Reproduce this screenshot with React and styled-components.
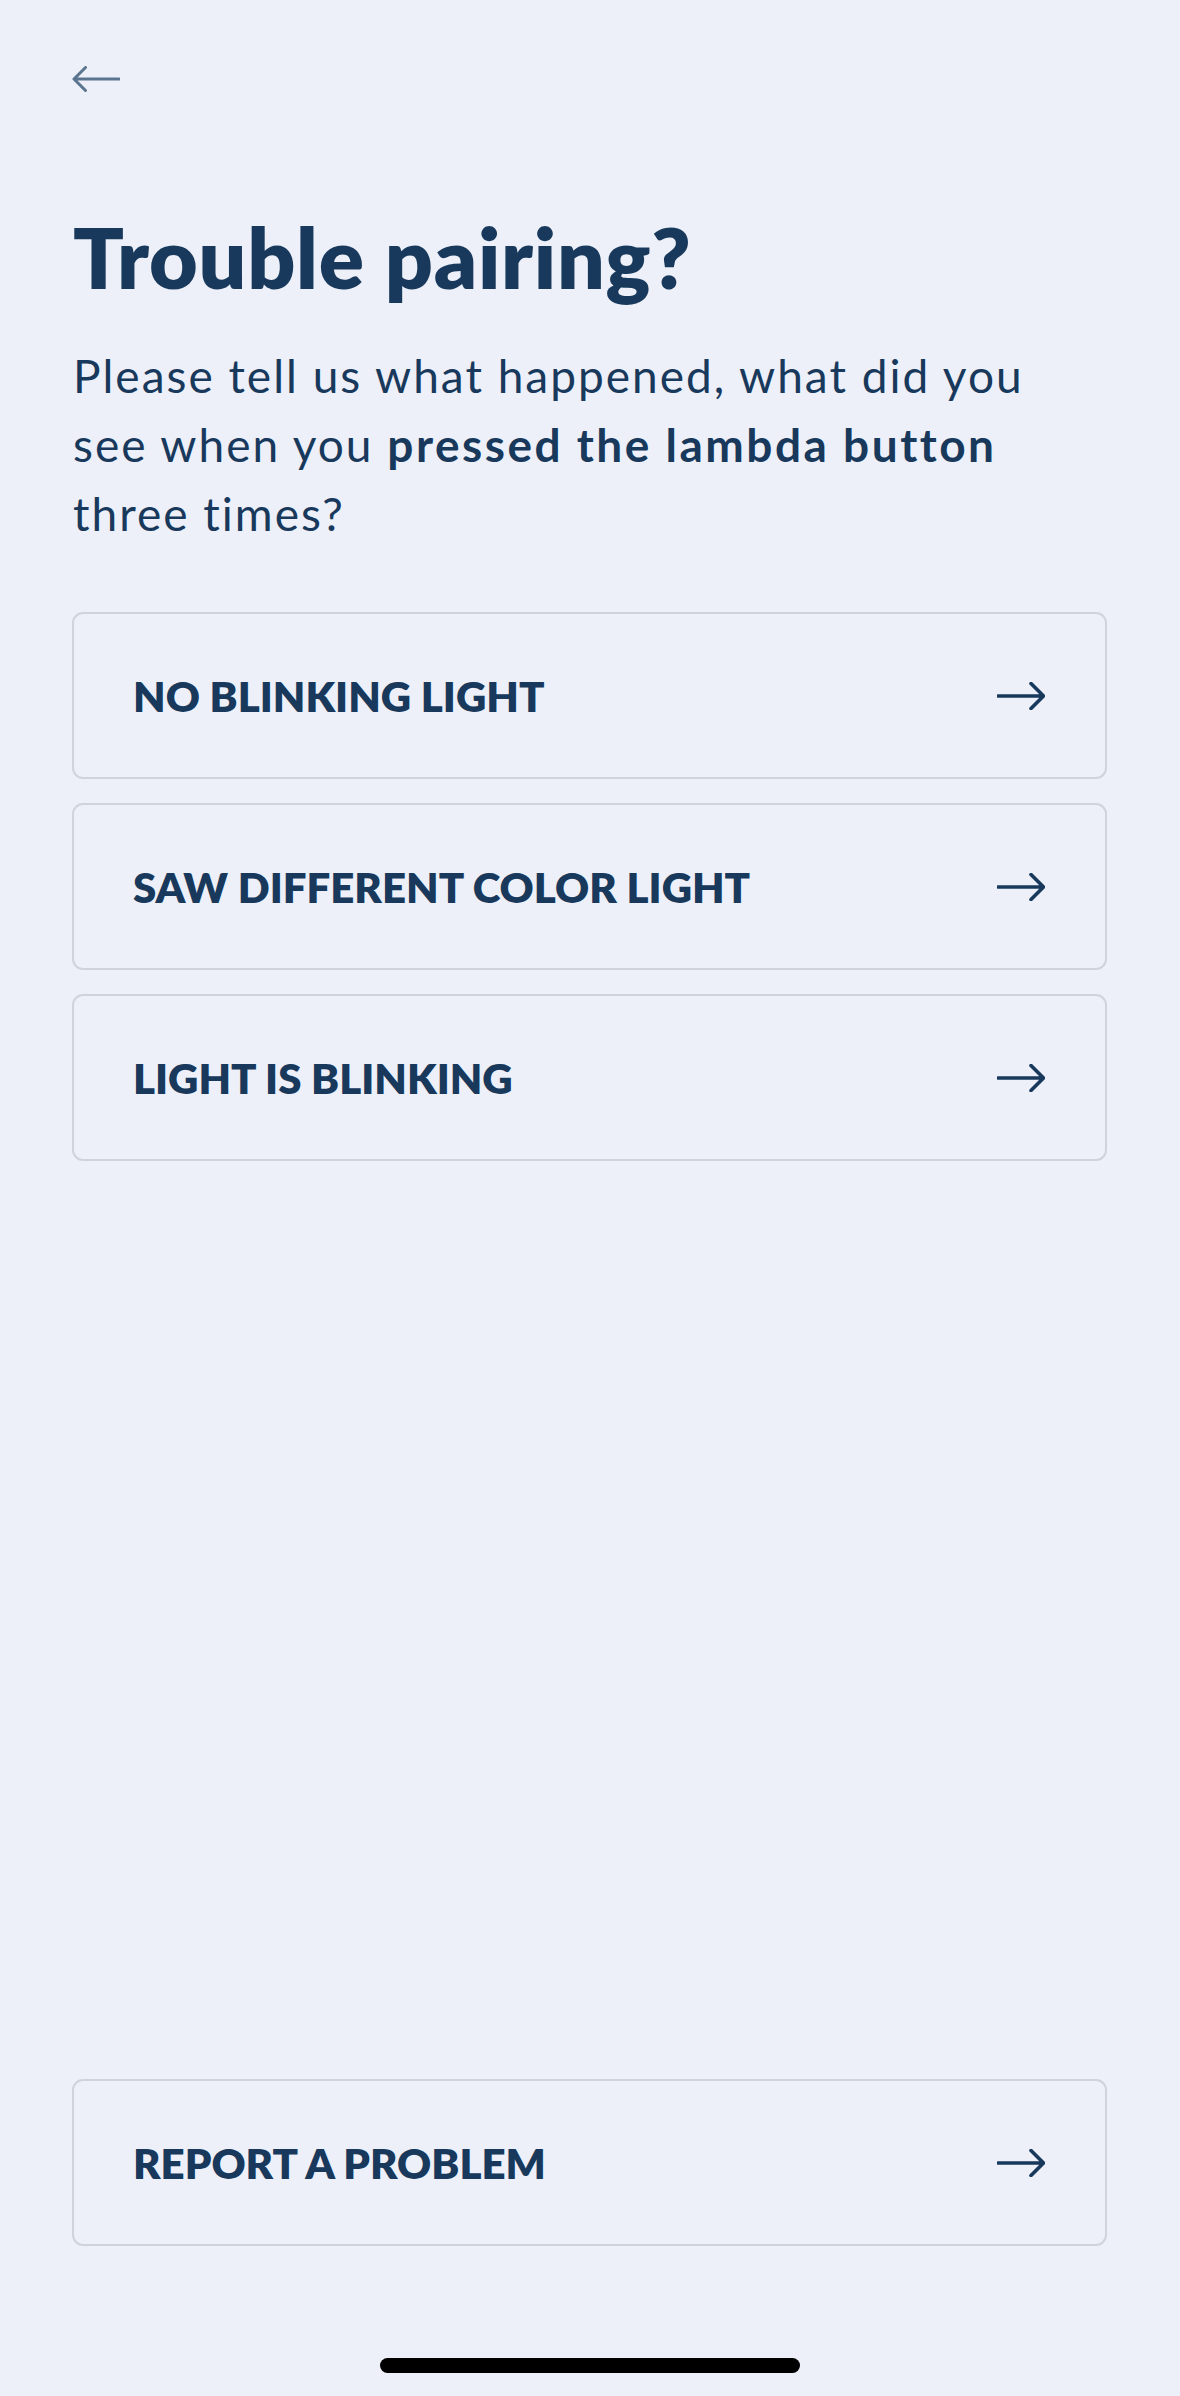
import React from "react";
import styled, { createGlobalStyle } from "styled-components";

const GlobalStyle = createGlobalStyle`
  html, body {
    margin: 0;
    padding: 0;
    background: #edf0f8;
  }
  body {
    font-family: Lato, "Liberation Sans", sans-serif;
    color: #18395c;
  }
`;

const Page = styled.div`
  min-height: 100vh;
  box-sizing: border-box;
  display: flex;
  flex-direction: column;
  padding: 0 73px 0 72px;
`;

const TopBar = styled.div`
  height: 207px;
  display: flex;
  align-items: flex-start;
  padding-top: 66px;
  box-sizing: border-box;
`;

const BackButton = styled.button`
  border: none;
  background: none;
  padding: 0;
  width: 48px;
  height: 26px;
  cursor: pointer;
  display: block;
`;

const Title = styled.h1`
  margin: 0;
  font-size: 84px;
  line-height: 100px;
  font-weight: 800;
  letter-spacing: 0.7px;
  padding-left: 1px;
`;

const Intro = styled.p`
  margin: 34px 0 0;
  max-width: 990px;
  font-size: 46px;
  line-height: 69px;
  font-weight: 400;
  letter-spacing: 2px;
  padding-left: 1px;

  strong {
    font-weight: 700;
    letter-spacing: 2.5px;
  }
`;

const Options = styled.div`
  margin-top: 64px;
  display: flex;
  flex-direction: column;
  gap: 24px;
`;

const Spacer = styled.div`
  flex: 1;
`;

const OptionCard = styled.button`
  height: 167px;
  width: 100%;
  box-sizing: border-box;
  display: flex;
  align-items: center;
  justify-content: space-between;
  padding: 0 60px 0 59px;
  background: transparent;
  border: 2px solid #cfd3dd;
  border-radius: 11px;
  cursor: pointer;
  color: #18395c;
  font-family: Lato, "Liberation Sans", sans-serif;
`;

const OptionLabel = styled.span`
  font-size: 42px;
  font-weight: 800;
  letter-spacing: 0;
  text-transform: uppercase;
`;

const Footer = styled.div`
  display: flex;
  flex-direction: column;
  align-items: center;
`;

const HomeIndicator = styled.div`
  width: 420px;
  height: 15px;
  border-radius: 8px;
  background: #000;
  margin: 112px 0 23px;
`;

const ArrowRight = () => (
  <svg width="48" height="28" viewBox="0 0 48 28" fill="none">
    <path
      d="M1 14H46M34 1.5L46.5 14L34 26.5"
      stroke="#18395c"
      strokeWidth="3.6"
      strokeLinecap="round"
      strokeLinejoin="round"
    />
  </svg>
);

const ArrowLeft = () => (
  <svg width="48" height="26" viewBox="0 0 48 26" fill="none">
    <path
      d="M47 13H2M13.5 1.5L2 13L13.5 24.5"
      stroke="#5b7591"
      strokeWidth="3"
      strokeLinecap="round"
      strokeLinejoin="round"
    />
  </svg>
);

const Option = ({ label }) => (
  <OptionCard>
    <OptionLabel>{label}</OptionLabel>
    <ArrowRight />
  </OptionCard>
);

const options = ["No blinking light", "Saw different color light", "Light is blinking"];

export default function App() {
  return (
    <>
      <GlobalStyle />
      <Page>
        <TopBar>
          <BackButton aria-label="Back">
            <ArrowLeft />
          </BackButton>
        </TopBar>
        <Title>Trouble pairing?</Title>
        <Intro>
          Please tell us what happened, what did you see when you{" "}
          <strong>pressed the lambda button</strong> three times?
        </Intro>
        <Options>
          {options.map((o) => (
            <Option key={o} label={o} />
          ))}
        </Options>
        <Spacer />
        <Footer>
          <Option label="Report a problem" />
          <HomeIndicator />
        </Footer>
      </Page>
    </>
  );
}
